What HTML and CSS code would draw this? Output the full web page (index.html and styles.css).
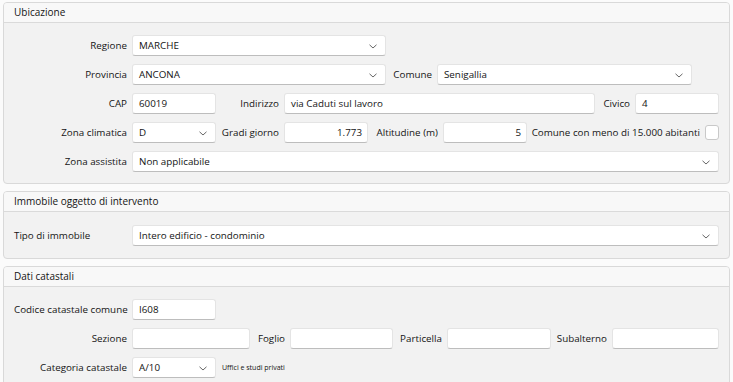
FILE: index.html
```html
<!DOCTYPE html>
<html lang="it">
  <head>
    <meta charset="utf-8">
    <title>Dati immobile</title>
    <link rel="stylesheet" href="styles.css">
  </head>
  <body>
    <div class="panel">
      <div class="panel-head">Ubicazione</div>
      <div class="panel-body">
        <div class="row">
          <span class="lbl w118">Regione</span>
          <div class="field sel w254">MARCHE<svg class="chev" width="8" height="5" viewBox="0 0 8 5"><path d="M0.5 0.8 L4 4 L7.5 0.8"/></svg></div>
        </div>
        <div class="row">
          <span class="lbl w118">Provincia</span>
          <div class="field sel w254">ANCONA<svg class="chev" width="8" height="5" viewBox="0 0 8 5"><path d="M0.5 0.8 L4 4 L7.5 0.8"/></svg></div>
          <span class="lbl w51">Comune</span>
          <div class="field sel w255">Senigallia<svg class="chev" width="8" height="5" viewBox="0 0 8 5"><path d="M0.5 0.8 L4 4 L7.5 0.8"/></svg></div>
        </div>
        <div class="row">
          <span class="lbl w118">CAP</span>
          <div class="field w84">60019</div>
          <span class="lbl w68">Indirizzo</span>
          <div class="field w311">via Caduti sul lavoro</div>
          <span class="lbl w40">Civico</span>
          <div class="field w84">4</div>
        </div>
        <div class="row">
          <span class="lbl w118">Zona climatica</span>
          <div class="field sel w84">D<svg class="chev" width="8" height="5" viewBox="0 0 8 5"><path d="M0.5 0.8 L4 4 L7.5 0.8"/></svg></div>
          <span class="lbl w68">Gradi giorno</span>
          <div class="field num w84">1.773</div>
          <span class="lbl w75">Altitudine (m)</span>
          <div class="field num w84">5</div>
          <span class="lbl w178">Comune con meno di 15.000 abitanti</span>
          <div class="check"></div>
        </div>
        <div class="row">
          <span class="lbl w118">Zona assistita</span>
          <div class="field sel grow">Non applicabile<svg class="chev" width="8" height="5" viewBox="0 0 8 5"><path d="M0.5 0.8 L4 4 L7.5 0.8"/></svg></div>
        </div>
      </div>
    </div>

    <div class="panel">
      <div class="panel-head">Immobile oggetto di intervento</div>
      <div class="panel-body single">
        <div class="row">
          <span class="lbl left w118">Tipo di immobile</span>
          <div class="field sel grow">Intero edificio - condominio<svg class="chev" width="8" height="5" viewBox="0 0 8 5"><path d="M0.5 0.8 L4 4 L7.5 0.8"/></svg></div>
        </div>
      </div>
    </div>

    <div class="panel">
      <div class="panel-head">Dati catastali</div>
      <div class="panel-body">
        <div class="row">
          <span class="lbl w118">Codice catastale comune</span>
          <div class="field w84">I608</div>
        </div>
        <div class="row">
          <span class="lbl w118">Sezione</span>
          <div class="field w118"></div>
          <span class="lbl w40">Foglio</span>
          <div class="field w103"></div>
          <span class="lbl w54">Particella</span>
          <div class="field w104"></div>
          <span class="lbl w61">Subalterno</span>
          <div class="field grow"></div>
        </div>
        <div class="row">
          <span class="lbl w118">Categoria catastale</span>
          <div class="field sel w84">A/10<svg class="chev" width="8" height="5" viewBox="0 0 8 5"><path d="M0.5 0.8 L4 4 L7.5 0.8"/></svg></div>
          <span class="note">Uffici e studi privati</span>
        </div>
      </div>
    </div>
  </body>
</html>
```

FILE: styles.css
```css
body {
  margin: 0;
  padding: 2px 3px;
  background-color: #fbfbfb;
  font-family: "Open Sans", "Noto Sans", sans-serif;
  font-size: 9.8px;
  color: #141414;
}
.panel {
  border: 1px solid #d9d9d9;
  border-radius: 4px;
  background-color: #f2f2f2;
  margin-bottom: 7px;
  overflow: hidden;
}
.panel-head {
  height: 19px;
  line-height: 19px;
  padding-left: 10px;
  font-size: 10px;
  background-color: #f8f8f8;
  border-bottom: 1px solid #dadada;
}
.panel-body {
  padding: 12px 10px 11px 10px;
}
.panel-body.single {
  padding-top: 13px;
  padding-bottom: 12px;
}
.row {
  display: flex;
  align-items: center;
  height: 21px;
  margin-bottom: 8px;
}
.row:last-child {
  margin-bottom: 0;
}
.lbl {
  flex: none;
  text-align: right;
  padding-right: 5px;
  box-sizing: border-box;
  white-space: nowrap;
}
.lbl.left {
  text-align: left;
}
.field {
  flex: none;
  position: relative;
  height: 21px;
  line-height: 20px;
  box-sizing: border-box;
  padding: 0 6px;
  background-color: #ffffff;
  border: 1px solid #e4e4e4;
  border-bottom-color: #bdbdbd;
  border-radius: 3px;
  white-space: nowrap;
}
.field.num {
  text-align: right;
  padding-right: 5px;
}
.field.grow {
  flex: 1;
}
.chev {
  position: absolute;
  right: 8px;
  top: 8px;
  fill: none;
  stroke: #666666;
  stroke-width: 1;
}
.check {
  flex: none;
  width: 14px;
  height: 15px;
  box-sizing: border-box;
  background-color: #ffffff;
  border: 1px solid #c9c9c9;
  border-radius: 3px;
}
.note {
  padding-left: 6px;
  font-size: 7px;
}
.w40 { width: 40px; }
.w51 { width: 51px; }
.w54 { width: 54px; }
.w61 { width: 61px; }
.w68 { width: 68px; }
.w75 { width: 75px; }
.w84 { width: 84px; }
.w103 { width: 103px; }
.w104 { width: 104px; }
.w118 { width: 118px; }
.w178 { width: 178px; }
.w254 { width: 254px; }
.w255 { width: 255px; }
.w311 { width: 311px; }
```
